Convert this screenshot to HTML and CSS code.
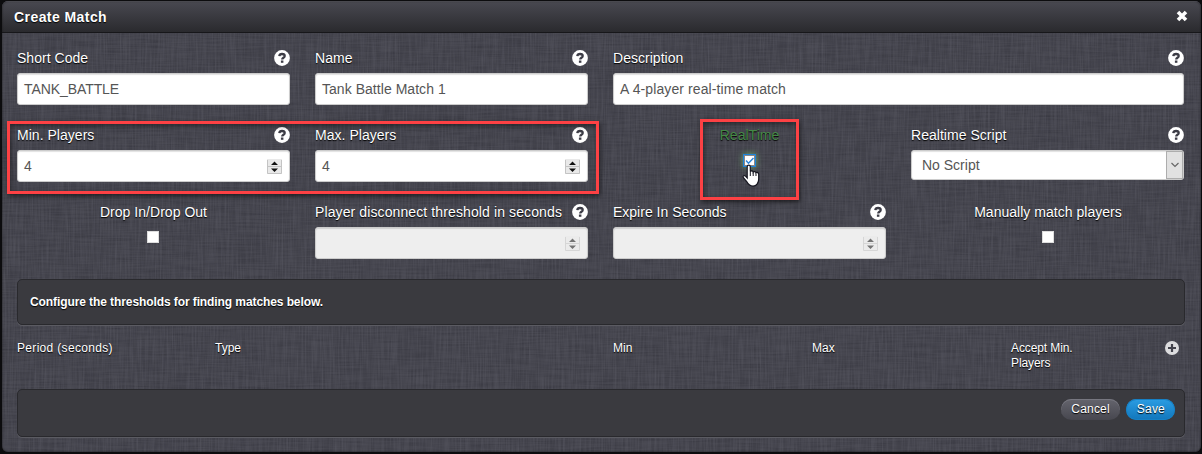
FILE: index.html
```html
<!DOCTYPE html>
<html lang="en">
<head>
<meta charset="utf-8">
<title>Create Match</title>
<link rel="stylesheet" href="styles.css">
</head>
<body>
<svg class="defs" width="0" height="0" aria-hidden="true">
  <symbol id="help" viewBox="0 0 16 16">
    <circle cx="8" cy="8" r="7.9" fill="#fff"/>
    <path d="M5.300 6.200C5.500 4.700 6.600 4 8 4c1.600 0 2.700.8 2.700 2 0 1.900-2.500 1.700-2.500 3.500" fill="none" stroke="#3c3c46" stroke-width="2.300"/>
    <rect x="6.900" y="10.500" width="2.500" height="2.300" fill="#3c3c46"/>
  </symbol>
  <symbol id="spin" viewBox="0 0 15 15">
    <rect width="15" height="15" fill="#e9e9e9"/>
    <path d="M.5 1v13.500h14V1M0 7.500h15" fill="none" stroke="#c4c4c4"/>
    <path d="M4 6h7L7.500 2.500zM4 9.500h7L7.500 13z" fill="currentColor"/>
  </symbol>
</svg>
<div class="modal">
  <svg class="linen" aria-hidden="true">
    <filter id="weft" x="0" y="0" width="100%" height="100%" color-interpolation-filters="sRGB"><feTurbulence type="fractalNoise" baseFrequency="0.03 0.6" numOctaves="2" seed="4"/><feColorMatrix values="0 0 0 0 0.05  0 0 0 0 0.05  0 0 0 0 0.08  0.9 0 0 0 -0.3"/></filter>
    <filter id="warp" x="0" y="0" width="100%" height="100%" color-interpolation-filters="sRGB"><feTurbulence type="fractalNoise" baseFrequency="0.6 0.03" numOctaves="2" seed="9"/><feColorMatrix values="0 0 0 0 0.6  0 0 0 0 0.6  0 0 0 0 0.65  0.7 0 0 0 -0.24"/></filter>
    <rect width="100%" height="100%" filter="url(#weft)"/>
    <rect width="100%" height="100%" filter="url(#warp)"/>
  </svg>
  <header class="modal-header">
    <h1 class="title">Create Match</h1>
    <svg class="close" viewBox="0 0 12 12"><path d="M2 2l8 8M10 2l-8 8" stroke="#fff" stroke-width="3.600"/></svg>
  </header>
  <main class="body">
    <div class="fields">
      <div class="field"><div class="label"><span>Short Code</span><svg class="help"><use href="#help"/></svg></div><div class="input code">TANK_BATTLE</div></div>
      <div class="field"><div class="label"><span>Name</span><svg class="help"><use href="#help"/></svg></div><div class="input name">Tank Battle Match 1</div></div>
      <div class="field wide"><div class="label"><span>Description</span><svg class="help"><use href="#help"/></svg></div><div class="input description">A 4-player real-time match</div></div>

      <div class="field"><div class="label"><span>Min. Players</span><svg class="help"><use href="#help"/></svg></div><div class="input number"><span>4</span><svg class="spin"><use href="#spin"/></svg></div></div>
      <div class="field"><div class="label"><span>Max. Players</span><svg class="help"><use href="#help"/></svg></div><div class="input number"><span>4</span><svg class="spin"><use href="#spin"/></svg></div></div>
      <div class="field check"><div class="label valid"><span>RealTime</span></div>
        <svg class="box focused" viewBox="0 0 13 13"><rect width="13" height="13" fill="#fff"/><rect x=".5" y=".5" width="12" height="12" fill="none" stroke="#1c83d8"/><rect x="1.500" y="1.500" width="10" height="10" fill="none" stroke="#111" stroke-dasharray="1 1"/><path d="M3 6.500l2.500 2.700L10.500 4" fill="none" stroke="#2c86d8" stroke-width="1.500"/></svg>
      </div>
      <div class="field"><div class="label"><span>Realtime Script</span><svg class="help"><use href="#help"/></svg></div><div class="select"><span>No Script</span><div class="arrow"><svg viewBox="0 0 10 6" width="10" height="6"><path d="M1.500 1L5 4.500 8.500 1" fill="none" stroke="#666" stroke-width="1.200"/></svg></div></div></div>

      <div class="field check"><div class="label"><span>Drop In/Drop Out</span></div><div class="box plain"></div></div>
      <div class="field"><div class="label"><span class="long">Player disconnect threshold in seconds</span><svg class="help"><use href="#help"/></svg></div><div class="input number disabled"><svg class="spin"><use href="#spin"/></svg></div></div>
      <div class="field"><div class="label"><span class="expire">Expire In Seconds</span><svg class="help"><use href="#help"/></svg></div><div class="input number disabled"><svg class="spin"><use href="#spin"/></svg></div></div>
      <div class="field check manual"><div class="label"><span>Manually match players</span></div><div class="box plain"></div></div>
    </div>
    <div class="well intro">Configure the thresholds for finding matches below.</div>
    <div class="columns">
      <span class="period">Period (seconds)</span><span>Type</span><span>Min</span><span>Max</span><span class="accept">Accept Min. Players</span>
      <svg class="add" viewBox="0 0 14 14"><circle cx="7" cy="7" r="7" fill="#dcdcde"/><path d="M7 3v8M3 7h8" stroke="#42424b" stroke-width="2.200"/></svg>
    </div>
    <div class="well actions"><span class="btn">Cancel</span><span class="btn primary">Save</span></div>
  </main>
</div>
<div class="mark players"></div>
<div class="mark realtime"></div>
<svg class="pointer" viewBox="0 0 18 23"><path d="M5.200 14V2.700C5.200.5 8.300.5 8.300 2.700v5.100C8.600 6.500 11 6.600 11.200 8.200c.6-1.100 2.600-.8 2.800.7.8-.9 2.700-.4 2.700 1.300v4.700c0 3.500-1.900 7.200-5.700 7.200-3.500 0-5-1.800-6.300-4.500L1.200 13.400c-.6-1.600 1.200-2.500 2.300-1.300z" fill="#fff" stroke="#15151f" stroke-width="1.200"/><path d="M8.300 8v4M11.200 8.500V12M14 9.500V12" stroke="#15151f" stroke-width="1"/></svg>
</body>
</html>
```
FILE: styles.css
```css
* { box-sizing: border-box; }
body {
  margin: 0;
  width: 1202px;
  height: 454px;
  padding: 1px 1px 2px 2px;
  overflow: hidden;
  background: #0c0c0e;
  font: 14px/20px "Liberation Sans", Arial, sans-serif;
  color: #fff;
}
.defs { position: absolute; }
.modal {
  position: relative;
  height: 451px;
  width: 1199px;
  border-radius: 6px;
  overflow: hidden;
  background: #46464f;
}
.modal::after {
  content: "";
  position: absolute;
  inset: 0;
  border-radius: 6px;
  box-shadow: inset 0 0 2px #17171a;
  pointer-events: none;
}
.linen { position: absolute; inset: 0; width: 100%; height: 100%; opacity: .36; }
.modal-header {
  position: relative;
  height: 32px;
  padding: 0 12px;
  display: flex;
  align-items: center;
  justify-content: space-between;
  border-top: 1px solid #5c5c64;
  border-bottom: 1px solid #17171a;
  background: linear-gradient(#484850, #2a2a2e);
}
.title { margin: 0; font-size: 14px; line-height: 20px; letter-spacing: .43px; text-shadow: 0 1px 1px #000; }
.close { width: 12px; height: 12px; margin: 0 1px 2px 0; }
.body { position: relative; padding: 15px 16px 0 15px; text-shadow: 0 1px 1px #000; }
.fields {
  display: grid;
  grid-template-columns: repeat(4, 273px);
  grid-auto-rows: 77px;
  column-gap: 25px;
}
.wide { grid-column: span 2; }
.label { display: flex; align-items: center; justify-content: space-between; height: 20px; margin-bottom: 5px; letter-spacing: .03px; }
.long { letter-spacing: .11px; }
.expire { letter-spacing: 0; }
.help { width: 16px; height: 16px; }
.input, .select {
  display: flex;
  align-items: center;
  justify-content: space-between;
  height: 32px;
  padding: 0 6px;
  border: 1px solid #ccc;
  border-radius: 3px;
  background: #fff;
  box-shadow: inset 0 1px 1px rgba(0, 0, 0, .12);
  color: #555;
  text-shadow: none;
}
.code { letter-spacing: -.08px; }
.name { letter-spacing: .04px; }
.description { letter-spacing: .1px; }
.spin { width: 15px; height: 15px; margin-left: auto; color: #111; }
.number { padding-right: 7px; }
.disabled { background: #eee; }
.disabled .spin { opacity: .55; }
.select { height: 30px; padding: 0 0 0 10px; }
.arrow {
  width: 17px;
  height: 28px;
  display: flex;
  align-items: center;
  justify-content: center;
  border: 1px solid #adadad;
  background: #e1e1e1;
}
.check { display: flex; flex-direction: column; align-items: center; }
.valid { color: #468847; }
.box { width: 13px; height: 13px; margin-top: 4px; }
.plain { width: 12px; height: 12px; margin-right: 1px; background: #fff; border: 1px solid #ddd; }
.manual { padding-left: 1px; }
.focused { box-shadow: 0 0 6px #6fac70; }
.well { border: 1px solid #29292d; border-radius: 5px; background: #3a3a3f; box-shadow: 0 1px 0 #5b5b62; }
.intro { height: 46px; padding: 12px; font-size: 12px; font-weight: bold; letter-spacing: -.09px; }
.columns {
  display: grid;
  grid-template-columns: 198px 398px 199px 199px 80px 1fr;
  height: 64px;
  padding-top: 16px;
  font-size: 12px;
  line-height: 15px;
}
.period { letter-spacing: .32px; }
.accept { letter-spacing: -.1px; }
.add { justify-self: end; width: 14px; height: 14px; margin: 0 6px 0 0; }
.actions { height: 48px; display: flex; justify-content: flex-end; gap: 6px; padding: 9px; }
.btn {
  height: 21px;
  padding: 0 10px;
  border-radius: 11px;
  background: linear-gradient(#64646d, #47474f);
  box-shadow: inset 0 1px 0 #777780;
  font-size: 12px;
  line-height: 20px;
  letter-spacing: .2px;
}
.primary { padding: 0 10px 0 11px; background: linear-gradient(#2b9de3, #1276bb); box-shadow: inset 0 0 0 1px #1680c5; }
.mark { position: absolute; border: 3px solid #fd4144; box-shadow: 1px 2px 5px rgba(0, 0, 0, .6), inset 1px 2px 5px rgba(0, 0, 0, .45); }
.players { left: 7px; top: 121px; width: 592px; height: 73px; }
.realtime { left: 700px; top: 119px; width: 99px; height: 81px; }
.pointer { position: absolute; left: 742px; top: 164px; width: 18px; height: 23px; }
```
